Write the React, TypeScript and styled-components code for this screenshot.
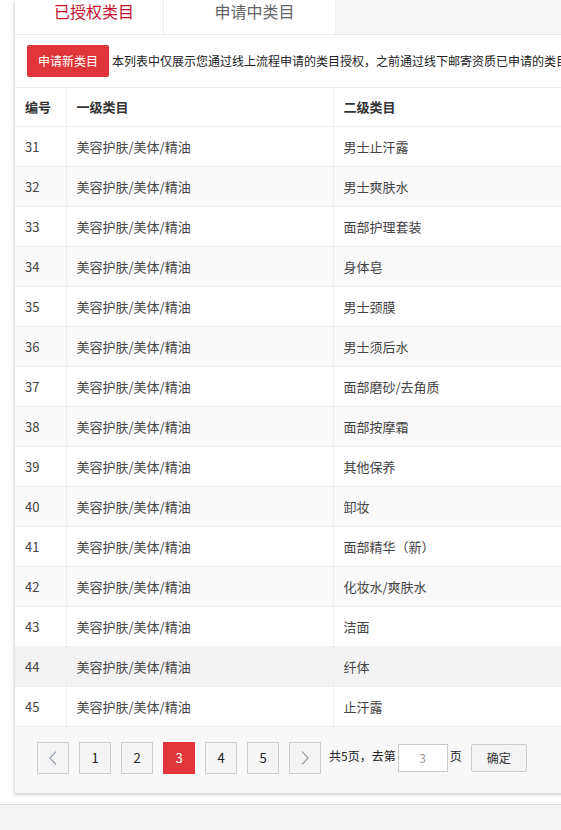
import styled, { createGlobalStyle } from 'styled-components'

const GlobalStyle = createGlobalStyle`
  html, body {
    margin: 0;
    padding: 0;
    background: #fff;
    overflow: hidden;
  }
  body {
    font-family: "Noto Sans CJK SC", "Noto Sans", sans-serif;
    color: #333;
  }
`

interface Row {
  id: number
  first: string
  second: string
}

const seconds = [
  '男士止汗露',
  '男士爽肤水',
  '面部护理套装',
  '身体皂',
  '男士颈膜',
  '男士须后水',
  '面部磨砂/去角质',
  '面部按摩霜',
  '其他保养',
  '卸妆',
  '面部精华（新）',
  '化妆水/爽肤水',
  '洁面',
  '纤体',
  '止汗露',
]

const rows: Row[] = seconds.map((second, i) => ({
  id: 31 + i,
  first: '美容护肤/美体/精油',
  second,
}))

const HOVER_ID = 44

const App = () => {
  return (
    <>
      <GlobalStyle />
      <Page>
        <Card>
          <TabBar>
            <Tab $active>已授权类目</Tab>
            <Tab $bordered>申请中类目</Tab>
          </TabBar>
          <Toolbar>
            <ApplyButton>申请新类目</ApplyButton>
            <Notice>本列表中仅展示您通过线上流程申请的类目授权，之前通过线下邮寄资质已申请的类目</Notice>
          </Toolbar>
          <Table>
            <thead>
              <tr>
                <HeadCell $width={51}>编号</HeadCell>
                <HeadCell $width={267}>一级类目</HeadCell>
                <HeadCell>二级类目</HeadCell>
              </tr>
            </thead>
            <tbody>
              {rows.map((row, i) => (
                <BodyRow key={row.id} $striped={i % 2 === 1} $hover={row.id === HOVER_ID}>
                  <Cell>{row.id}</Cell>
                  <Cell>{row.first}</Cell>
                  <Cell>{row.second}</Cell>
                </BodyRow>
              ))}
            </tbody>
          </Table>
          <Pager>
            <PageButton aria-label="上一页">
              <svg width="8" height="14" viewBox="0 0 8 14">
                <polyline points="7,0.5 1,7 7,13.5" fill="none" stroke="#7f8fa0" strokeWidth="1.1" />
              </svg>
            </PageButton>
            {[1, 2, 3, 4, 5].map((n) => (
              <PageButton key={n} $active={n === 3}>
                {n}
              </PageButton>
            ))}
            <PageButton aria-label="下一页">
              <svg width="8" height="14" viewBox="0 0 8 14">
                <polyline points="1,0.5 7,7 1,13.5" fill="none" stroke="#8f8a80" strokeWidth="1.1" />
              </svg>
            </PageButton>
            <PagerText>共5页，去第</PagerText>
            <JumpInput defaultValue="3" />
            <PagerText $tight>页</PagerText>
            <ConfirmButton>确定</ConfirmButton>
          </Pager>
        </Card>
        <Spacer />
        <Footer />
      </Page>
    </>
  )
}

export default App

const Page = styled.div`
  display: flex;
  flex-direction: column;
  width: 561px;
  height: 830px;
  overflow: hidden;
`

const Card = styled.div`
  margin-left: 15px;
  width: 1000px;
  flex-shrink: 0;
  background: #fff;
  box-shadow: -1px 2px 3px rgba(0, 0, 0, 0.18);
`

const TabBar = styled.div`
  display: flex;
  height: 35px;
  box-sizing: border-box;
  background: #f7f7f7;
  border-bottom: 1px solid #e8e8e8;
`

const Tab = styled.div<{ $active?: boolean; $bordered?: boolean }>`
  display: flex;
  align-items: flex-start;
  justify-content: center;
  box-sizing: border-box;
  width: ${(p) => (p.$bordered ? '173px' : '148px')};
  background: #fff;
  font-size: 16px;
  line-height: 22px;
  padding: 0 0 0 10px;
  color: ${(p) => (p.$active ? '#c8102e' : '#666')};
  border-left: ${(p) => (p.$bordered ? '1px solid #eee' : 'none')};
  border-right: ${(p) => (p.$bordered ? '1px solid #eee' : 'none')};
`

const Toolbar = styled.div`
  display: flex;
  align-items: center;
  height: 53px;
  box-sizing: border-box;
  padding: 0 0 1px 12px;
  border-bottom: 1px solid #eee;
  white-space: nowrap;
`

const ApplyButton = styled.button`
  width: 82px;
  height: 32px;
  border: none;
  border-radius: 2px;
  background: #e0353a;
  color: #fff;
  font-family: inherit;
  font-size: 12px;
  padding: 0;
  flex-shrink: 0;
`

const Notice = styled.span`
  margin-left: 3px;
  font-size: 12px;
  color: #222;
`

const Table = styled.table`
  width: 100%;
  border-collapse: collapse;
  table-layout: fixed;
`

const HeadCell = styled.th<{ $width?: number }>`
  box-sizing: border-box;
  width: ${(p) => (p.$width ? `${p.$width}px` : 'auto')};
  height: 38px;
  padding: 0 0 0 10px;
  text-align: left;
  font-size: 13px;
  font-weight: 600;
  color: #333;
  border-bottom: 1px solid #eee;
  border-right: 1px solid #eee;
`

const BodyRow = styled.tr<{ $striped: boolean; $hover: boolean }>`
  background: ${(p) => (p.$hover ? '#f3f3f3' : p.$striped ? '#fafafa' : '#fff')};
`

const Cell = styled.td`
  height: 39px;
  padding: 0 0 0 10px;
  font-size: 13px;
  color: #444;
  border-bottom: 1px solid #eee;
  border-right: 1px solid #eee;
  white-space: nowrap;
`

const Pager = styled.div`
  display: flex;
  align-items: center;
  height: 66px;
  box-sizing: border-box;
  padding: 0 0 4px 22px;
  background: #f8f8f8;
`

const PageButton = styled.div<{ $active?: boolean }>`
  display: flex;
  align-items: center;
  justify-content: center;
  width: 32px;
  height: 32px;
  box-sizing: border-box;
  margin-right: 10px;
  border: 1px solid ${(p) => (p.$active ? '#e0353a' : '#ccc')};
  background: ${(p) => (p.$active ? '#e0353a' : '#f4f4f4')};
  color: ${(p) => (p.$active ? '#fff' : '#222')};
  font-size: 13px;
  &:nth-child(7) {
    margin-right: 8px;
  }
`

const PagerText = styled.span<{ $tight?: boolean }>`
  font-size: 12px;
  color: #222;
  margin: ${(p) => (p.$tight ? '0 9px 0 2px' : '0 2px 0 0')};
  padding-bottom: 4px;
`

const JumpInput = styled.input`
  width: 50px;
  height: 28px;
  box-sizing: border-box;
  border: 1px solid #ccc;
  background: #fff;
  text-align: center;
  font-family: inherit;
  font-size: 12px;
  color: #999;
  outline: none;
  padding: 0;
`

const ConfirmButton = styled.button`
  width: 56px;
  height: 28px;
  border: 1px solid #ccc;
  border-radius: 2px;
  background: #f4f4f4;
  font-family: inherit;
  font-size: 12px;
  color: #333;
  padding: 0;
`

const Spacer = styled.div`
  height: 11px;
  flex-shrink: 0;
`

const Footer = styled.div`
  flex: 1;
  background: #f4f4f4;
  border-top: 1px solid #ddd;
`
